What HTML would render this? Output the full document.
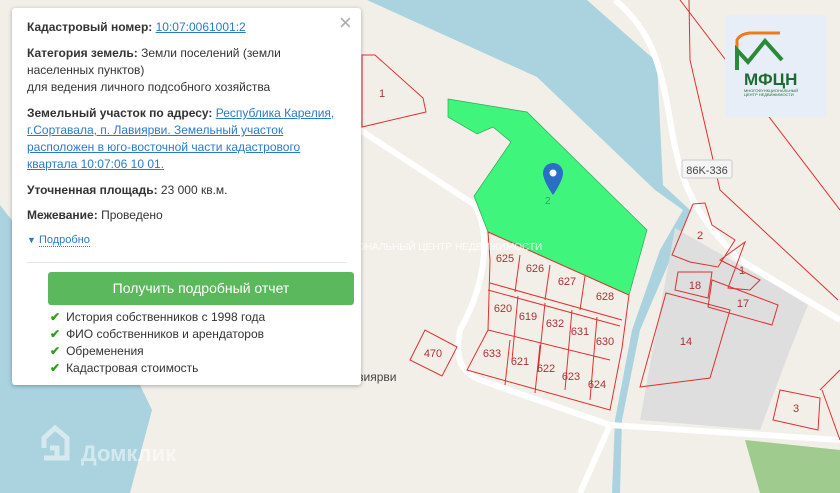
<!DOCTYPE html><html><head><meta charset="utf-8"><style>
body{margin:0;width:840px;height:493px;overflow:hidden;position:relative;font-family:"Liberation Sans",Arial,sans-serif;background:#f2efe9}
svg{position:absolute;left:0;top:0}
.p{position:absolute;left:12px;top:8px;width:349px;height:377px;background:#fff;border-radius:3px;box-shadow:0 1px 4px rgba(0,0,0,.3);font-size:12px;color:#333}
.p .l{position:absolute;left:15px;line-height:17px;width:320px}
b{font-weight:bold}
a{color:#2a7ac9;text-decoration:underline}
.x{position:absolute;left:327px;top:2px;font-size:22px;color:#aaa}
.btn{position:absolute;left:36px;top:264px;width:306px;height:33px;background:#5cb85c;border-radius:3px;color:#fff;font-size:14px;text-align:center;line-height:33px}
.c{position:absolute;left:38px;font-size:12px;line-height:17px}
.c span{color:#2c9e1c;font-weight:bold;margin-right:6px}
</style></head><body>
<svg width="840" height="493" viewBox="0 0 840 493">
<polygon points="367,0 587,0 657,62 663,185 690,210 670,260 640,330 622,420 620,493 612,493 615,420 632,330 660,250 683,210 655,190 537,77" fill="#aad3df"/>
<polygon points="0,205 140,385 152,410 130,493 0,493" fill="#aad3df"/>
<polygon points="675,228 775,285 808,305 790,350 760,430 640,420" fill="#dedede"/>
<polygon points="745,440 840,450 840,493 760,493" fill="#9fcb8f"/>
<g fill="none" stroke="#fff" stroke-width="6">
<path d="M615,0 C650,30 660,60 670,120 C680,180 690,210 740,260 L840,320"/>
<path d="M360,130 L475,205 C490,230 488,280 460,330 C455,360 460,370 480,380 L610,425 L840,440"/>
<path d="M610,425 L580,493"/>
</g>
<polygon points="448,99 527,112 647,230 629,295 488,232 474,196 511,142 493,127 477,134 448,117" fill="#3ff57c" stroke="#2ea85a" stroke-width="0.7"/>
<g fill="none" stroke="#e03030" stroke-width="1">
<polygon points="362,55 375,55 423,98 426,112 362,127"/>
<polygon points="488,232 629,295 622,348 610,410 467,370 488,330 490,260"/>
<path d="M490,283 L622,320 M488,290 L620,326 M520,255 L515,292 M550,265 L545,300 M585,276 L580,310 M488,330 L610,360 M518,296 L512,360 M545,303 L538,372 M572,310 L565,390 M597,317 L590,400 M510,340 L505,385 M540,345 L535,393"/>
<polygon points="410,360 425,330 457,347 442,376"/>
<polygon points="693,204 705,203 712,225 735,240 718,267 690,262 672,255"/>
<polygon points="720,260 760,280 750,290 728,288 745,242"/>
<polygon points="678,272 712,272 708,298 675,290"/>
<polygon points="712,280 778,305 772,325 708,307"/>
<polygon points="666,293 730,310 710,378 640,387"/>
<polygon points="780,390 820,398 818,430 773,420"/>
<path d="M689,0 L690,60 L720,190 L838,300 M680,0 L840,210 M820,390 L840,370 M822,390 L840,440"/>
</g>
<g font-size="11" fill="#a33" text-anchor="middle" font-family="Liberation Sans">
<text x="382" y="97">1</text><text x="700" y="239">2</text><text x="742" y="274">1</text><text x="695" y="289">18</text><text x="743" y="307">17</text><text x="686" y="345">14</text><text x="796" y="412">3</text><text x="433" y="357">470</text>
<text x="503" y="312">620</text><text x="528" y="320">619</text><text x="555" y="327">632</text><text x="580" y="335">631</text><text x="605" y="345">630</text><text x="492" y="357">633</text><text x="520" y="365">621</text><text x="546" y="372">622</text><text x="571" y="380">623</text><text x="597" y="388">624</text><text x="505" y="262">625</text><text x="535" y="272">626</text><text x="567" y="285">627</text><text x="605" y="300">628</text>
</g>
<rect x="682" y="160" width="50" height="18" rx="2" fill="#f5f5f5" stroke="#ccc"/>
<text x="707" y="174" font-size="11" fill="#444" text-anchor="middle">86K-336</text>
<text x="358" y="381" font-size="12" fill="#444">зиярви</text>
<text x="280" y="250" font-size="10" fill="#fff" opacity=".85">МНОГОФУНКЦИОНАЛЬНЫЙ ЦЕНТР НЕДВИЖИМОСТИ</text>
<path d="M553,163 a10,10 0 0 1 10,10 c0,8 -10,22 -10,22 c0,0 -10,-14 -10,-22 a10,10 0 0 1 10,-10z" fill="#2a6fc4"/>
<circle cx="553" cy="173" r="3.5" fill="#fff"/>
<text x="545" y="204" font-size="10" fill="#2ea85a">2</text>
<rect x="725" y="15" width="101" height="102" fill="#e8eef8"/>
<path d="M737,50 L737,40 Q740,34 750,33 L780,33" stroke="#f07a1a" stroke-width="3" fill="none"/>
<path d="M737,70 L737,50 L748,62 L765,41 L782,60" stroke="#2a8a3a" stroke-width="4" fill="none"/>
<text x="744" y="85" font-size="17" font-weight="bold" fill="#1d6b30">МФЦН</text>
<text x="744" y="92" font-size="4" fill="#1d6b30">МНОГОФУНКЦИОНАЛЬНЫЙ</text>
<text x="744" y="96" font-size="4" fill="#1d6b30">ЦЕНТР НЕДВИЖИМОСТИ</text>
<path d="M44,448 L44,438 L55,428 L67,438 L67,458 L44,458 M57,458 L57,448 L50,448" fill="none" stroke="#fff" stroke-width="5" opacity=".5"/>
<text x="81" y="461" font-size="22" font-weight="bold" fill="#fff" opacity=".5">Домклик</text>
</svg>
<div class="p">
<div class="x">×</div>
<div class="l" style="top:11px"><b>Кадастровый номер:</b> <a>10:07:0061001:2</a></div>
<div class="l" style="top:37px"><b>Категория земель:</b> Земли поселений (земли населенных пунктов)<br>для ведения личного подсобного хозяйства</div>
<div class="l" style="top:97px"><b>Земельный участок по адресу:</b> <a>Республика Карелия, г.Сортавала, п. Лавиярви. Земельный участок расположен в юго-восточной части кадастрового квартала 10:07:06 10 01.</a></div>
<div class="l" style="top:174px"><b>Уточненная площадь:</b> 23 000 кв.м.</div>
<div class="l" style="top:199px"><b>Межевание:</b> Проведено</div>
<div class="l" style="top:224px;font-size:11px"><span style="color:#2a7ac9;font-size:9px">▼</span> <span style="color:#2a7ac9;border-bottom:1px dotted #2a7ac9">Подробно</span></div>
<div style="position:absolute;left:15px;top:254px;width:320px;height:1px;background:#e5e5e5"></div>
<div class="btn">Получить подробный отчет</div>
<div class="c" style="top:301px"><span>✔</span>История собственников с 1998 года</div>
<div class="c" style="top:318px"><span>✔</span>ФИО собственников и арендаторов</div>
<div class="c" style="top:335px"><span>✔</span>Обременения</div>
<div class="c" style="top:352px"><span>✔</span>Кадастровая стоимость</div>
</div>
</body></html>
